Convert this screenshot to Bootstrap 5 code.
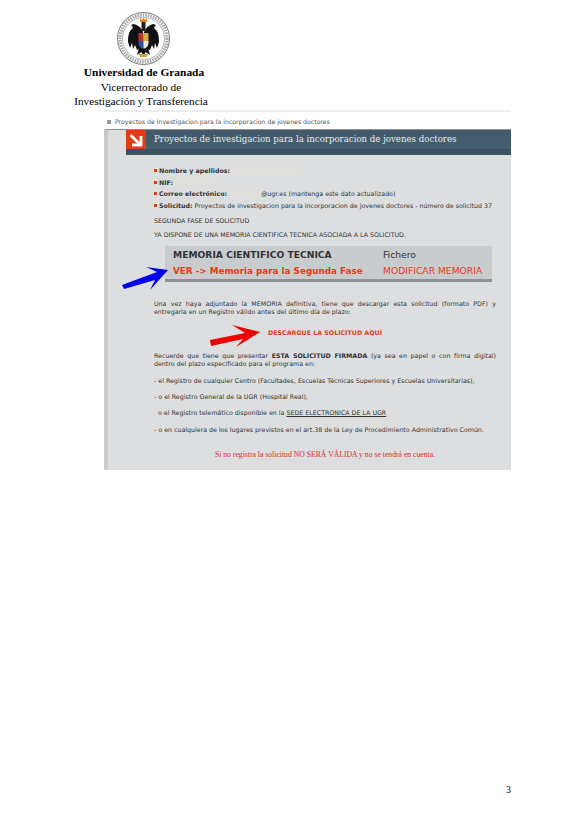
<!DOCTYPE html>
<html lang="es">
<head>
<meta charset="utf-8">
<title>Memoria</title>
<link href="https://cdn.jsdelivr.net/npm/bootstrap@5.3.0/dist/css/bootstrap.min.css" rel="stylesheet">
<style>
body{background:#fff;margin:0;color:#000;}
.hoja{width:580px;height:820px;padding:12px 69px 24px 74px;font-family:"Liberation Serif",serif;}
.membrete{width:134px;font-size:11.3px;line-height:14.5px;text-align:center;white-space:nowrap;}
.escudo{width:53px;height:53px;display:block;margin:0 0 0 43px;}
.uni{padding-left:6px;font-size:11.4px;}
.filete{height:2px;background:#eeeeee;margin:1.5px 0 0 30px;}
.miga{font-family:"DejaVu Sans",sans-serif;font-size:6.2px;line-height:8px;color:#555;margin:6px 0 3px 33px;white-space:nowrap;}
.miga i{display:inline-block;width:4px;height:4px;background:#999;margin-right:4px;}
.panel{position:relative;width:407px;height:341px;margin-left:30px;background:#dcdedf;border-left:4px solid #c9cbcc;border-top:1px solid #8a9296;font-family:"DejaVu Sans",sans-serif;font-size:6.3px;color:#333;}
.cabecera{margin-left:18px;height:25px;background:linear-gradient(#44586a 0,#44606f 74%,#3a4f5c 76%,#3f5564 100%);color:#e8ecee;display:flex;align-items:flex-start;font-family:"DejaVu Serif","Liberation Serif",serif;font-size:8.6px;line-height:19px;white-space:nowrap;}
.naranja{width:20px;height:19px;background:#de3e14;margin-right:8px;display:flex;align-items:center;justify-content:center;}
.cuerpo{padding:10px 0 0 46px;width:388px;}
.dato{line-height:11.6px;display:flex;align-items:center;white-space:nowrap;}
.dato i{width:3px;height:3px;background:#d8401a;margin-right:2px;display:inline-block;flex:none;}
.dato b{color:#333;}
.oculto{display:inline-block;height:8px;background:#e0dfdb;}
.o1{width:70px;}.o2{width:44px;}.o3{width:32px;}
.parr{margin:0;line-height:8.4px;}
.unalinea{white-space:nowrap;}
.tabla{width:327px;height:36px;margin:6px 0 0 11px;background:#c9cccf;border-bottom:3px solid #8e9496;padding:1px 8px;font-size:9.2px;line-height:16.5px;white-space:nowrap;}
.fila{display:flex;}
.fila span:first-child{width:210px;font-weight:700;flex:none;}
.fila.rojo span:first-child{font-size:8.8px;}
.rojo{color:#e23c17;}
.just{text-align:justify;}
.justa{display:block;text-align:justify;text-align-last:justify;white-space:nowrap;}
.flecha{position:absolute;}
.azul{left:14px;top:137px;width:47px;height:24px;}
.roja{left:101px;top:195px;width:52px;height:23px;}
.pagina{font-size:10px;text-align:right;line-height:12px;}
.aviso{color:#e22a2a;font-family:"Liberation Serif",serif;font-size:7.7px;white-space:nowrap;}
</style>
</head>
<body>
<div class="hoja d-flex flex-column">
  <div class="membrete">
    <svg class="escudo" viewBox="0 0 53 53">
      <circle cx="26.5" cy="26.5" r="26" fill="#fff" stroke="#555" stroke-width=".8"/>
      <circle cx="26.5" cy="26.5" r="23.5" fill="none" stroke="#aaa" stroke-width="3.4" stroke-dasharray="1.6 1"/>
      <circle cx="26.5" cy="26.5" r="21" fill="#fff" stroke="#666" stroke-width=".5"/>
      <g id="ala" fill="#111">
        <path d="M26 20 C23 14 20 13 17 12 L14 13 L16 15.5 L15 17 C12 19 11 24 11 30 L13 36 L15 31 L16 37 L18 33 L20 38 L23 37 L26.5 36z"/>
      </g>
      <use href="#ala" transform="matrix(-1 0 0 1 53 0)"/>
      <path fill="#111" d="M22 36 L31 36 L33 43 L28.5 40 L26.5 44 L24.5 40 L20 43z"/>
      <path fill="#d9821e" d="M23 6 L25 8 L26.5 6 L28 8 L30 6 L30 10 L23 10z"/>
      <rect x="24.5" y="10" width="4" height="9" fill="#222"/>
      <path fill="#b8332e" d="M21.5 21 H26.5 V29 H21.5z"/>
      <path fill="#d4ad3c" d="M26.5 21 H31.5 V29 H26.5z"/>
      <path fill="#2f4f9a" d="M21.5 29 H26.5 V36.5 C24 36.5 21.5 34 21.5 31z"/>
      <path fill="#e9e4dc" d="M26.5 29 H31.5 V31 C31.5 34 29 36.5 26.5 36.5z"/>
      <path fill="#c9a43a" d="M22 42 h9 l-1 3 h-7z"/>
    </svg>
    <div class="fw-bold uni">Universidad de Granada</div>
    <div>Vicerrectorado de</div>
    <div>Investigación y Transferencia</div>
  </div>
  <div class="filete"></div>
  <div class="miga"><i></i>Proyectos de investigacion para la incorporacion de jovenes doctores</div>
  <div class="panel">
    <div class="cabecera">
      <div class="naranja"><svg width="14" height="14" viewBox="0 0 14 14"><path d="M1.5 2 L11 11.5 M12 3 V12 H3" fill="none" stroke="#fff" stroke-width="2.8"/></svg></div>
      <span>Proyectos de investigacion para la incorporacion de jovenes doctores</span>
    </div>
    <div class="cuerpo">
      <div class="dato"><i></i><b>Nombre y apellidos:</b>&nbsp;<span class="oculto o1"></span></div>
      <div class="dato"><i></i><b>NIF:</b>&nbsp;<span class="oculto o2"></span></div>
      <div class="dato"><i></i><b>Correo electrónico:</b>&nbsp;<span class="oculto o3"></span>@ugr.es (mantenga este dato actualizado)</div>
      <div class="dato"><i></i><b>Solicitud:</b>&nbsp;<span>Proyectos de investigacion para la incorporacion de jovenes doctores - número de solicitud 37</span></div>
      <p class="parr" style="margin-top:6px">SEGUNDA FASE DE SOLICITUD</p>
      <p class="parr" style="margin-top:5.6px">YA DISPONE DE UNA MEMORIA CIENTIFICA TECNICA ASOCIADA A LA SOLICITUD.</p>
      <div class="tabla">
        <div class="fila"><span>MEMORIA CIENTIFICO TECNICA</span><span>Fichero</span></div>
        <div class="fila rojo"><span>VER -&gt; Memoria para la Segunda Fase</span><span>MODIFICAR MEMORIA</span></div>
      </div>
      <p class="parr just" style="margin-top:18px">Una vez haya adjuntado la MEMORIA definitiva, tiene que descargar esta solicitud (formato PDF) y entregarla en un Registro válido antes del último día de plazo:</p>
      <p class="parr rojo fw-bold text-center" style="margin-top:12px">DESCARGUE LA SOLICITUD AQUÍ</p>
      <p class="parr" style="margin-top:14.5px"><span class="justa">Recuerde que tiene que presentar <b>ESTA SOLICITUD FIRMADA</b> (ya sea en papel o con firma digital)</span>dentro del plazo especificado para el programa en:</p>
      <p class="parr unalinea" style="margin-top:8.2px">- el Registro de cualquier Centro (Facultades, Escuelas Técnicas Superiores y Escuelas Universitarias),</p>
      <p class="parr unalinea" style="margin-top:8px">- o el Registro General de la UGR (Hospital Real),</p>
      <p class="parr unalinea" style="margin-top:8px">&nbsp; o el Registro telemático disponible en la <u>SEDE ELECTRONICA DE LA UGR</u></p>
      <p class="parr unalinea" style="margin-top:8.5px">- o en cualquiera de los lugares previstos en el art.38 de la Ley de Procedimiento Administrativo Común.</p>
      <p class="parr aviso text-center" style="margin-top:16px">Si no registra la solicitud NO SERÁ VÁLIDA y no se tendrá en cuenta.</p>
    </div>
    <svg class="flecha azul" viewBox="122 267 47 24"><path fill="#0000f0" d="M122 285 L157 272 L146 267 L168 270 L150 290 L155 280 L124 289z"/></svg>
    <svg class="flecha roja" viewBox="209 325 52 23"><path fill="#f00000" d="M210 340 L245 333 L232 325 L260 332 L236 347 L243 339 L211 346z"/></svg>
  </div>
  <div class="pagina mt-auto">3</div>
</div>
<script src="https://cdn.jsdelivr.net/npm/bootstrap@5.3.0/dist/js/bootstrap.bundle.min.js"></script>
</body>
</html>
